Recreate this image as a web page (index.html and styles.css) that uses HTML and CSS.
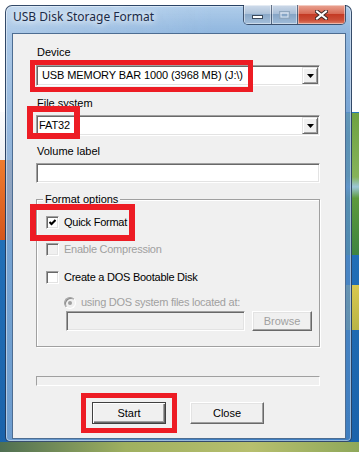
FILE: index.html
```html
<!DOCTYPE html>
<html lang="en">
<head>
    <meta charset="UTF-8">
    <title>USB Disk Storage Format</title>
    <link rel="stylesheet" href="styles.css">
</head>
<body>
<div class="desktop">
    <div class="window">
        <div class="titlebar">
            <span class="title">USB Disk Storage Format</span>
            <div class="caption">
                <span class="cap cap-min">
                    <svg width="11" height="4" viewBox="0 0 11 4"><rect x="0.5" y="0.5" width="10" height="3" fill="#fff" stroke="#3b4a5c"/></svg>
                </span>
                <span class="cap cap-max">
                    <svg width="11" height="8" viewBox="0 0 11 8"><rect x="0.5" y="0.5" width="10" height="7" fill="none" stroke="#8fa6bd"/><rect x="2" y="2" width="7" height="4" fill="none" stroke="#dfe8f1"/></svg>
                </span>
                <span class="cap cap-close">
                    <svg width="13" height="10" viewBox="0 0 13 10"><path d="M2 1.5 L11 8.5 M11 1.5 L2 8.5" stroke="#3a2a28" stroke-width="4" stroke-linecap="square"/><path d="M2 1.5 L11 8.5 M11 1.5 L2 8.5" stroke="#fff" stroke-width="2" stroke-linecap="square"/></svg>
                </span>
            </div>
        </div>
        <div class="client">
            <div class="label">Device</div>
            <div class="combo">
                <span class="combo-text">USB MEMORY BAR 1000 (3968 MB) (J:\)</span>
                <span class="combo-btn"><svg width="7" height="4" viewBox="0 0 7 4"><path d="M0 0 H7 L3.5 4 Z" fill="#000"/></svg></span>
            </div>

            <div class="label label-gap">File system</div>
            <div class="combo">
                <span class="combo-text combo-text-tight">FAT32</span>
                <span class="combo-btn"><svg width="7" height="4" viewBox="0 0 7 4"><path d="M0 0 H7 L3.5 4 Z" fill="#000"/></svg></span>
            </div>

            <div class="label label-gap2">Volume label</div>
            <div class="textbox"></div>

            <div class="group">
                <div class="legend">Format options</div>
                <div class="check-row row-quick">
                    <span class="checkbox"><svg width="7" height="7" viewBox="0 0 7 7"><path d="M0.5 3 L2.5 5 L6.5 1" stroke="#000" stroke-width="2" fill="none"/></svg></span>
                    <span>Quick Format</span>
                </div>
                <div class="check-row row-compress disabled">
                    <span class="checkbox"></span>
                    <span>Enable Compression</span>
                </div>
                <div class="check-row row-dos">
                    <span class="checkbox"></span>
                    <span>Create a DOS Bootable Disk</span>
                </div>
                <div class="check-row row-radio disabled">
                    <span class="radio"><span class="radio-dot"></span></span>
                    <span>using DOS system files located at:</span>
                </div>
                <div class="path-row">
                    <div class="textbox path-box"></div>
                    <div class="button button-browse">Browse</div>
                </div>
            </div>

            <div class="progress"></div>

            <div class="button-row">
                <div class="button button-default">Start</div>
                <div class="button">Close</div>
            </div>
        </div>
    </div>

    <div class="mark mark-device"></div>
    <div class="mark mark-fs"></div>
    <div class="mark mark-quick"></div>
    <div class="mark mark-start"></div>
</div>
</body>
</html>
```

FILE: styles.css
```css
* {
    box-sizing: border-box;
}
body {
    margin: 0;
    font-family: "Liberation Sans", Arial, sans-serif;
    font-size: 11px;
    color: #000;
}
.desktop {
    position: relative;
    width: 359px;
    height: 452px;
    overflow: hidden;
    padding: 5px 0 0 5px;
    background:
        linear-gradient(90deg, #4f6f52, #9fb060 35%, #b7bf6e 70%, #8fa85a) 0 442px / 100% 10px no-repeat,
        linear-gradient(180deg, #d8c84f, #b9b446) 100% 285px / 22px 45px no-repeat,
        linear-gradient(180deg, #6fa242, #86b35a 45%, #9cc7d8 52%, #5d9a3c 60%, #3f8440) 100% 113px / 22px 142px no-repeat,
        linear-gradient(180deg, #ee7c2e, #d4561d) 0 160px / 14px 80px no-repeat,
        linear-gradient(180deg, #fafbfc, #eef1f4) 0 112px / 14px 48px no-repeat,
        linear-gradient(#fff, #fff) 0 0 / 100% 112px no-repeat,
        linear-gradient(180deg, #2a7fc6, #1a62aa);
}

/* window frame */
.window {
    width: 347px;
    height: 437px;
    display: flex;
    flex-direction: column;
    border: 1px solid rgba(25, 45, 75, 0.8);
    border-radius: 7px 7px 5px 5px;
    background:
        linear-gradient(90deg, rgba(255, 255, 255, 0.25) 0, rgba(255, 255, 255, 0) 60%),
        linear-gradient(180deg, rgba(168, 200, 232, 0.92) 0, rgba(128, 172, 218, 0.88) 27px, rgba(88, 142, 200, 0.85) 130px, rgba(72, 132, 196, 0.82) 100%);
    box-shadow: inset 0 0 0 1px rgba(255, 255, 255, 0.45);
}
.titlebar {
    height: 27px;
    display: flex;
    padding: 0 5px 0 7px;
}
.title {
    font-family: "Noto Sans", "Open Sans", sans-serif;
    font-size: 12px;
    line-height: 16px;
    padding-top: 3px;
    color: #1b2a46;
    text-shadow: 0 0 6px #fff, 0 0 10px rgba(255, 255, 255, 0.9);
}
.caption {
    margin-left: auto;
    margin-top: -1px;
    display: flex;
    height: 20px;
    border: 1px solid rgba(30, 45, 70, 0.75);
    border-top: none;
    border-radius: 0 0 5px 5px;
    overflow: hidden;
}
.cap {
    display: flex;
    align-items: center;
    justify-content: center;
    box-shadow: inset 0 0 0 1px rgba(255, 255, 255, 0.45);
}
.cap-min {
    width: 28px;
    padding-top: 5px;
    border-right: 1px solid rgba(30, 45, 70, 0.6);
    background: linear-gradient(180deg, #d0dceb 0, #aec3da 45%, #8aa8c8 50%, #a4bfdb 100%);
}
.cap-max {
    width: 26px;
    border-right: 1px solid rgba(30, 45, 70, 0.6);
    background: linear-gradient(180deg, #cdd9e8 0, #a9bfd8 45%, #86a5c6 50%, #a0bcd9 100%);
}
.cap-close {
    width: 47px;
    background: linear-gradient(180deg, #eaa493 0, #d86c57 45%, #c43a24 50%, #cc4f38 80%, #de8068 100%);
}

/* client area */
.client {
    height: 406px;
    margin: 0 5px 0 6px;
    padding: 12px 25px 0 23px;
    background: #f0f0f0;
    border: 1px solid #4d6d92;
}
.label {
    height: 13px;
    line-height: 13px;
    padding-left: 1px;
}
.label-gap {
    margin-top: 11px;
}
.label-gap2 {
    margin-top: 9px;
}
.combo {
    display: flex;
    height: 21px;
    margin-top: 5px;
    padding: 1px;
    background: #fff;
    border: 1px solid;
    border-color: #a0a0a0 #fff #fff #a0a0a0;
    box-shadow: inset 1px 1px 0 #696969, inset -1px -1px 0 #e3e3e3;
}
.label:first-child + .combo {
    margin-top: 6px;
}
.combo-text {
    flex: 1;
    line-height: 17px;
    padding-left: 4px;
    letter-spacing: -0.1px;
}
.combo-text-tight {
    padding-left: 1px;
}
.combo-btn {
    width: 16px;
    height: 17px;
    display: flex;
    align-items: center;
    justify-content: center;
    background: #f0f0f0;
    border: 1px solid;
    border-color: #e3e3e3 #696969 #696969 #e3e3e3;
    box-shadow: inset 1px 1px 0 #fff, inset -1px -1px 0 #a0a0a0;
}
.textbox {
    height: 20px;
    margin-top: 5px;
    background: #fff;
    border: 1px solid;
    border-color: #a0a0a0 #fff #fff #a0a0a0;
    box-shadow: inset 1px 1px 0 #696969, inset -1px -1px 0 #e3e3e3;
}

/* format options group */
.group {
    height: 148px;
    margin-top: 16px;
    padding: 0 0 0 9px;
    border: 1px solid #a0a0a0;
    box-shadow: 1px 1px 0 #fff, inset 1px 1px 0 #fff;
}
.legend {
    width: max-content;
    margin: -7px 0 0 -3px;
    padding: 0 2px;
    line-height: 13px;
    background: #f0f0f0;
}
.check-row {
    display: flex;
    align-items: center;
    gap: 5px;
    height: 13px;
    line-height: 13px;
    letter-spacing: -0.25px;
}
.row-quick {
    margin-top: 10px;
}
.row-compress {
    margin-top: 14px;
}
.row-dos {
    margin-top: 15px;
}
.row-radio {
    margin-top: 12px;
    padding-left: 18px;
}
.disabled {
    color: #a0a0a0;
}
.checkbox {
    width: 13px;
    height: 13px;
    display: flex;
    align-items: center;
    justify-content: center;
    background: #fff;
    border: 1px solid;
    border-color: #a0a0a0 #fff #fff #a0a0a0;
    box-shadow: inset 1px 1px 0 #696969, inset -1px -1px 0 #e3e3e3;
}
.disabled .checkbox {
    background: #f0f0f0;
}
.radio {
    width: 12px;
    height: 12px;
    display: flex;
    align-items: center;
    justify-content: center;
    border-radius: 50%;
    background: #f0f0f0;
    border: 1px solid;
    border-color: #a0a0a0 #fff #fff #a0a0a0;
    box-shadow: inset 1px 1px 0 #8a8a8a;
}
.radio-dot {
    width: 4px;
    height: 4px;
    border-radius: 50%;
    background: #a0a0a0;
}
.path-row {
    display: flex;
    gap: 7px;
    margin-top: 2px;
    padding-left: 20px;
}
.path-box {
    width: 179px;
    margin-top: 0;
    background: #f0f0f0;
}

/* buttons */
.progress {
    height: 10px;
    margin-top: 29px;
    border: 1px solid;
    border-color: #a0a0a0 #fff #fff #a0a0a0;
}
.button-row {
    display: flex;
    justify-content: center;
    gap: 24px;
    margin-top: 16px;
}
.button {
    width: 74px;
    height: 22px;
    display: flex;
    align-items: center;
    justify-content: center;
    background: #f0f0f0;
    border: 1px solid;
    border-color: #fff #696969 #696969 #fff;
    box-shadow: inset -1px -1px 0 #a0a0a0, inset 1px 1px 0 #e3e3e3;
}
.button-default {
    border-color: #404040;
    box-shadow: inset 1px 1px 0 #fff, inset -1px -1px 0 #696969, inset -2px -2px 0 #a0a0a0;
}
.button-browse {
    width: 60px;
    height: 20px;
    color: #a0a0a0;
}

/* red annotation boxes */
.mark {
    position: absolute;
    border: 5px solid #ed1c24;
}
.mark-device {
    left: 30px;
    top: 60px;
    width: 223px;
    height: 32px;
}
.mark-fs {
    left: 27px;
    top: 106px;
    width: 53px;
    height: 33px;
    border-width: 6px;
}
.mark-quick {
    left: 30px;
    top: 204px;
    width: 105px;
    height: 37px;
    border-width: 6px;
}
.mark-start {
    left: 81px;
    top: 393px;
    width: 96px;
    height: 40px;
}
```
